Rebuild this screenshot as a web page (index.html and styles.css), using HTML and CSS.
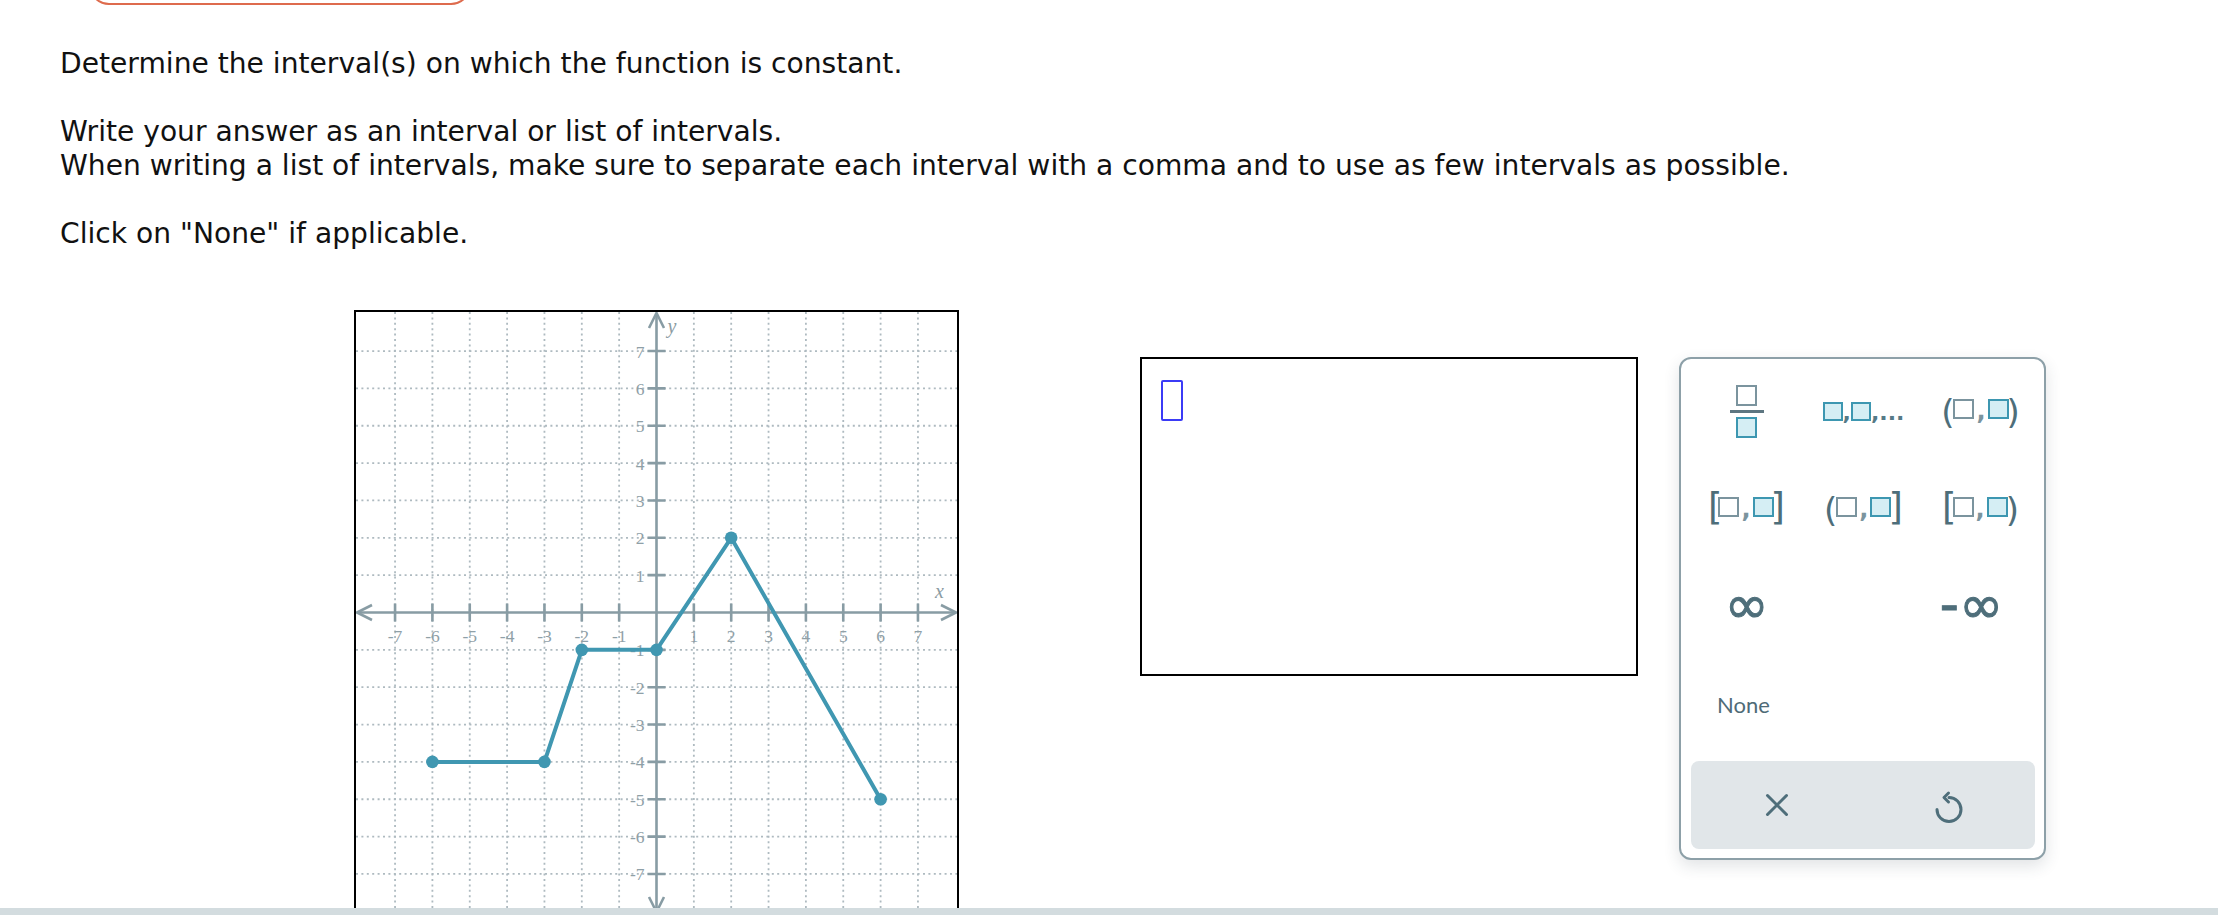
FILE: index.html
```html
<!DOCTYPE html>
<html lang="en">
<head>
<meta charset="utf-8">
<title>Constant intervals</title>
<link rel="stylesheet" href="styles.css">
</head>
<body>
<div class="page">
  <div class="top-btn"></div>
  <div class="prompt">
    <p>Determine the interval(s) on which the function is constant.</p>
    <p class="gap">Write your answer as an interval or list of intervals.</p>
    <p>When writing a list of intervals, make sure to separate each interval with a comma and to use as few intervals as possible.</p>
    <p class="gap">Click on "None" if applicable.</p>
  </div>
  <div class="work">
    <div class="graph">
      <svg width="601" height="601" viewBox="0 0 601 601">
        <g transform="translate(300.5 300.5)">
          <path class="grid" d="M-261.45 -300.5V300.5M-224.1 -300.5V300.5M-186.75 -300.5V300.5M-149.4 -300.5V300.5M-112.05 -300.5V300.5M-74.7 -300.5V300.5M-37.35 -300.5V300.5M37.35 -300.5V300.5M74.7 -300.5V300.5M112.05 -300.5V300.5M149.4 -300.5V300.5M186.75 -300.5V300.5M224.1 -300.5V300.5M261.45 -300.5V300.5"/>
          <path class="grid" d="M-300.5 -261.45H300.5M-300.5 -224.1H300.5M-300.5 -186.75H300.5M-300.5 -149.4H300.5M-300.5 -112.05H300.5M-300.5 -74.7H300.5M-300.5 -37.35H300.5M-300.5 37.35H300.5M-300.5 74.7H300.5M-300.5 112.05H300.5M-300.5 149.4H300.5M-300.5 186.75H300.5M-300.5 224.1H300.5M-300.5 261.45H300.5"/>
          <path class="axis" d="M-299.5 0H299.5M0 -299.5V299.5"/>
          <path class="axis" d="M-284.5 -7.5L-299.5 0L-284.5 7.5M284.5 -7.5L299.5 0L284.5 7.5M-7.5 -284.5L0 -299.5L7.5 -284.5M-7.5 284.5L0 299.5L7.5 284.5"/>
          <path class="axis" d="M-261.45 -9V9M-224.1 -9V9M-186.75 -9V9M-149.4 -9V9M-112.05 -9V9M-74.7 -9V9M-37.35 -9V9M37.35 -9V9M74.7 -9V9M112.05 -9V9M149.4 -9V9M186.75 -9V9M224.1 -9V9M261.45 -9V9"/>
          <path class="axis" d="M-9 -261.45H9M-9 -224.1H9M-9 -186.75H9M-9 -149.4H9M-9 -112.05H9M-9 -74.7H9M-9 -37.35H9M-9 37.35H9M-9 74.7H9M-9 112.05H9M-9 149.4H9M-9 186.75H9M-9 224.1H9M-9 261.45H9"/>
          <g class="xlbl">
            <text x="-261.45" y="29">-7</text>
            <text x="-224.1" y="29">-6</text>
            <text x="-186.75" y="29">-5</text>
            <text x="-149.4" y="29">-4</text>
            <text x="-112.05" y="29">-3</text>
            <text x="-74.7" y="29">-2</text>
            <text x="-37.35" y="29">-1</text>
            <text x="37.35" y="29">1</text>
            <text x="74.7" y="29">2</text>
            <text x="112.05" y="29">3</text>
            <text x="149.4" y="29">4</text>
            <text x="186.75" y="29">5</text>
            <text x="224.1" y="29">6</text>
            <text x="261.45" y="29">7</text>
          </g>
          <g class="ylbl">
            <text x="-12" y="-255">7</text>
            <text x="-12" y="-217.6">6</text>
            <text x="-12" y="-180.3">5</text>
            <text x="-12" y="-142.9">4</text>
            <text x="-12" y="-105.6">3</text>
            <text x="-12" y="-68.2">2</text>
            <text x="-12" y="-30.9">1</text>
            <text x="-12" y="43.8">-1</text>
            <text x="-12" y="81.2">-2</text>
            <text x="-12" y="118.5">-3</text>
            <text x="-12" y="155.9">-4</text>
            <text x="-12" y="193.2">-5</text>
            <text x="-12" y="230.6">-6</text>
            <text x="-12" y="267.9">-7</text>
          </g>
          <text class="var" x="283" y="-14.5">x</text>
          <text class="var" x="15.5" y="-280">y</text>
          <polyline class="fn" points="-224.1,149.4 -112.05,149.4 -74.7,37.35 0,37.35 74.7,-74.7 224.1,186.75"/>
          <g class="pt">
            <circle cx="-224.1" cy="149.4" r="6.3"/>
            <circle cx="-112.05" cy="149.4" r="6.3"/>
            <circle cx="-74.7" cy="37.35" r="6.3"/>
            <circle cx="0" cy="37.35" r="6.3"/>
            <circle cx="74.7" cy="-74.7" r="6.3"/>
            <circle cx="224.1" cy="186.75" r="6.3"/>
          </g>
        </g>
      </svg>
    </div>

    <div class="answer"><div class="cursor"></div></div>

    <div class="palette">
      <div class="keys">
        <div class="key">
          <span class="frac"><span class="sq"></span><span class="fl"></span><span class="sq f"></span></span>
        </div>
        <div class="key">
          <span class="list"><span class="sq f"></span><span class="lc">,</span><span class="sq f"></span><span class="lc">,...</span></span>
        </div>
        <div class="key">
          <span class="iv"><span class="p l">(</span><span class="sq"></span><span class="cm">,</span><span class="sq f"></span><span class="p r">)</span></span>
        </div>

        <div class="key">
          <span class="iv"><span class="b l">[</span><span class="sq"></span><span class="cm">,</span><span class="sq f"></span><span class="b r">]</span></span>
        </div>
        <div class="key">
          <span class="iv"><span class="p l">(</span><span class="sq"></span><span class="cm">,</span><span class="sq f"></span><span class="b r">]</span></span>
        </div>
        <div class="key">
          <span class="iv"><span class="b l">[</span><span class="sq"></span><span class="cm">,</span><span class="sq f"></span><span class="p r">)</span></span>
        </div>

        <div class="key"><span class="inf">∞</span></div>
        <div class="key"></div>
        <div class="key"><span class="inf neg">-∞</span></div>

        <div class="key"><span class="none">None</span></div>
        <div class="key"></div>
        <div class="key"></div>
      </div>
      <div class="bar">
        <div class="bkey">
          <svg class="ico-x" width="24" height="24" viewBox="0 0 24 24"><path d="M2.5 2.5L21.5 21.5M21.5 2.5L2.5 21.5"/></svg>
        </div>
        <div class="bkey">
          <svg class="ico-undo" width="30" height="34" viewBox="0 0 30 34"><path d="M15 7.5A12 12 0 1 1 3 19.5"/><path d="M14.5 3L10 7.5L14.5 12"/></svg>
        </div>
      </div>
    </div>
  </div>
</div>
<div class="footbar"></div>
</body>
</html>
```

FILE: styles.css
```css
* { box-sizing: border-box; }

html, body {
  margin: 0;
  padding: 0;
  background: #ffffff;
  overflow: hidden;
}

body {
  width: 2218px;
  height: 915px;
  font-family: "DejaVu Sans", Verdana, sans-serif;
  color: #111111;
}

.page {
  padding-left: 60px;
}

.top-btn {
  width: 382px;
  height: 40px;
  margin: -35px 0 0 29px;
  border: 2px solid #de6b4d;
  border-radius: 20px;
}

.prompt {
  margin-top: 42px;
  font-size: 28.15px;
  line-height: 34px;
}

.prompt p {
  margin: 0;
  white-space: nowrap;
}

.prompt .gap {
  margin-top: 34px;
}

.work {
  display: flex;
  align-items: flex-start;
  margin-top: 59px;
}

/* ---------- graph ---------- */
.graph {
  margin-left: 294px;
  width: 605px;
  height: 605px;
  border: 2px solid #000000;
  flex: none;
}

.graph svg { display: block; }

.grid {
  fill: none;
  stroke: #aebac0;
  stroke-width: 1.8px;
  stroke-dasharray: 2px 3.4px;
}

.axis {
  fill: none;
  stroke: #889ca4;
  stroke-width: 2.6px;
}

.xlbl text, .ylbl text {
  font-family: "Liberation Serif", "Times New Roman", serif;
  font-size: 17.5px;
  fill: #8fa0a7;
}

.xlbl text { text-anchor: middle; }
.ylbl text { text-anchor: end; }

.var {
  font-family: "Liberation Serif", "Times New Roman", serif;
  font-style: italic;
  font-size: 20px;
  fill: #8b9ba2;
  text-anchor: middle;
}

.fn {
  fill: none;
  stroke: #4097b1;
  stroke-width: 4px;
  stroke-linejoin: round;
}

.pt circle { fill: #4097b1; }

/* ---------- answer ---------- */
.answer {
  margin: 47px 0 0 181px;
  width: 498px;
  height: 319px;
  border: 2px solid #000000;
  padding: 21px 0 0 19px;
  flex: none;
}

.cursor {
  width: 22px;
  height: 41px;
  border: 2px solid #3b3bf6;
  border-radius: 2px;
}

/* ---------- palette ---------- */
.palette {
  margin: 47px 0 0 41px;
  width: 367px;
  height: 503px;
  border: 2px solid #8da0a8;
  border-radius: 12px;
  box-shadow: 0 6px 16px rgba(40, 60, 70, 0.14);
  padding-top: 3px;
  flex: none;
  background: #ffffff;
}

.keys {
  margin-left: 7px;
  display: grid;
  grid-template-columns: repeat(3, 117px);
  grid-auto-rows: 98px;
}

.key {
  display: flex;
  align-items: center;
  justify-content: center;
}

.sq {
  display: block;
  width: 21px;
  height: 20px;
  border: 2.5px solid #7b949e;
  background: #ffffff;
  flex: none;
}

.sq.f {
  border-color: #3d97b1;
  background: #d5eef4;
}

.frac {
  display: flex;
  flex-direction: column;
  align-items: center;
}

.frac .sq { height: 21px; }

.fl {
  display: block;
  width: 34px;
  height: 3px;
  margin: 4px 0;
  background: #5d7681;
}

.list {
  display: flex;
  align-items: center;
}

.list .sq { width: 20px; height: 19px; }

.lc {
  font-size: 22px;
  line-height: 22px;
  font-weight: bold;
  color: #557a87;
  margin-top: 4px;
}

.iv {
  display: flex;
  align-items: center;
}

.iv .sq { margin-bottom: 4px; }

.p {
  font-size: 34px;
  line-height: 34px;
  height: 34px;
  color: #4e6e7a;
  margin-top: 2px;
}

.p.l { margin-right: -1px; }
.p.r { margin-left: -2px; }

.b {
  font-size: 37px;
  line-height: 37px;
  height: 37px;
  color: #4e6e7a;
  margin-bottom: 3px;
}

.b.l { margin-right: -4px; }
.b.r { margin-left: -3px; }

.cm {
  font-size: 24px;
  line-height: 24px;
  font-weight: bold;
  margin: 0 2px;
  color: #7b949e;
}

.inf {
  font-size: 53px;
  line-height: 53px;
  color: #4e6e7a;
  -webkit-text-stroke: 1px #4e6e7a;
  margin-bottom: 5px;
}

.inf.neg { margin-right: 18px; }

.none {
  font-family: Lato, "Open Sans", sans-serif;
  font-size: 22px;
  line-height: 22px;
  color: #4f6b77;
  margin-right: 6px;
}

.bar {
  margin: 7px 0 0 10px;
  width: 344px;
  height: 88px;
  border-radius: 8px;
  background: #e1e6e9;
  display: grid;
  grid-template-columns: 1fr 1fr;
}

.bkey {
  display: flex;
  align-items: center;
  justify-content: center;
}

.bkey svg { display: block; }

.ico-x path,
.ico-undo path {
  fill: none;
  stroke: #4e6e7a;
  stroke-width: 3px;
  stroke-linecap: round;
  stroke-linejoin: round;
}

.ico-undo { margin-top: 4px; }

/* ---------- bottom strip ---------- */
.footbar {
  position: fixed;
  left: 0;
  right: 0;
  bottom: 0;
  height: 7px;
  background: #d3dcdf;
}
```
